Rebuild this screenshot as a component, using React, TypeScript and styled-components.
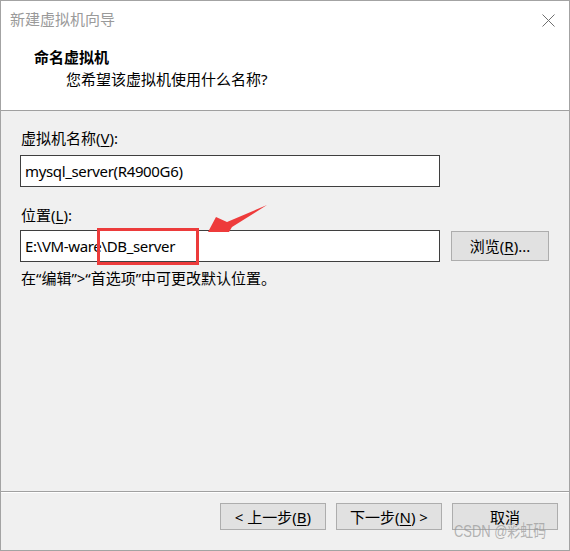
import React from "react";
import styled, { createGlobalStyle } from "styled-components";

const Global = createGlobalStyle`
  html, body { margin: 0; padding: 0; background: #ffffff; }
  body { font-family: "Noto Sans", "Noto Sans CJK SC", sans-serif; }
  #root { width: 570px; height: 551px; }
`;

const Window = styled.div`
  position: relative;
  box-sizing: border-box;
  width: 570px;
  height: 551px;
  border: 1px solid #a3a3a3;
  background: #f0f0f0;
  display: flex;
  flex-direction: column;
  font-family: "Noto Sans", "Noto Sans CJK SC", sans-serif;
  font-size: 15px;
  color: #000;
  overflow: hidden;
`;

const Header = styled.div`
  height: 109px;
  background: #ffffff;
  border-bottom: 1px solid #a0a0a0;
  display: flex;
  flex-direction: column;
  position: relative;
`;

const TitleBar = styled.div`
  display: flex;
  justify-content: space-between;
  align-items: center;
  height: 24px;
  padding: 6px 14px 0 9px;
`;

const Title = styled.span`
  color: #9a9a9a;
  font-size: 15px;
  line-height: 20px;
`;

const CloseButton = styled.span`
  display: flex;
  width: 13px;
  height: 13px;
  margin-top: 2px;
`;

const HeaderTitle = styled.div`
  font-weight: bold;
  font-size: 15px;
  line-height: 20px;
  margin: 16px 0 0 33px;
`;

const HeaderSub = styled.div`
  font-size: 15px;
  line-height: 20px;
  margin: 2px 0 0 65px;
`;

const Content = styled.div`
  flex: 1;
  display: flex;
  flex-direction: column;
  padding: 17px 0 0 19px;
`;

const Label = styled.div<{ $top?: number }>`
  line-height: 20px;
  margin-top: ${(p) => p.$top ?? 0}px;
  padding-left: 1px;
`;

const Row = styled.div`
  display: flex;
  align-items: center;
  gap: 11px;
`;

const Field = styled.div<{ $top: number }>`
  box-sizing: border-box;
  width: 420px;
  height: 32px;
  margin-top: ${(p) => p.$top}px;
  background: #ffffff;
  border: 1px solid #3f3f3f;
  padding: 0 0 0 4px;
  display: flex;
  align-items: center;
  line-height: 20px;
  letter-spacing: -0.35px;
  white-space: pre;
`;

const Button = styled.div<{ $w?: number; $h?: number }>`
  box-sizing: border-box;
  width: ${(p) => p.$w ?? 98}px;
  height: ${(p) => p.$h ?? 30}px;
  background: #e1e1e1;
  border: 1px solid #adadad;
  display: flex;
  align-items: center;
  justify-content: center;
  line-height: 20px;
  white-space: pre;
`;

const Note = styled.div`
  line-height: 20px;
  margin-top: 6px;
  padding-left: 1px;
`;

const Footer = styled.div`
  height: 47px;
  border-top: 1px solid #a0a0a0;
  box-shadow: inset 0 1px 0 #ffffff;
  display: flex;
  justify-content: flex-end;
  align-items: flex-start;
  gap: 10px;
  padding: 11px 11px 0 0;
`;

const Key = styled.u`
  text-decoration-thickness: 1px;
  text-underline-offset: 2px;
`;

const Highlight = styled.div`
  position: absolute;
  left: 96px;
  top: 227px;
  width: 102px;
  height: 37px;
  box-sizing: border-box;
  border: 3px solid #ec3b3b;
  pointer-events: none;
`;

const Overlay = styled.svg`
  position: absolute;
  left: 0;
  top: 0;
  pointer-events: none;
`;

const Watermark = styled.div`
  position: absolute;
  left: 453px;
  top: 519px;
  font-size: 17px;
  line-height: 24px;
  color: rgba(150, 150, 150, 0.7);
  font-family: "Liberation Sans", "Noto Sans CJK SC", sans-serif;
  transform: scaleX(0.76);
  transform-origin: left center;
  white-space: pre;
  pointer-events: none;
`;

export default function App() {
  return (
    <>
      <Global />
      <Window>
        <Header>
          <TitleBar>
            <Title>新建虚拟机向导</Title>
            <CloseButton>
              <svg width="13" height="13" viewBox="0 0 13 13">
                <path d="M0.5 0.5 L12.5 12.5 M12.5 0.5 L0.5 12.5" stroke="#6f6f6f" strokeWidth="1" fill="none" />
              </svg>
            </CloseButton>
          </TitleBar>
          <HeaderTitle>命名虚拟机</HeaderTitle>
          <HeaderSub>您希望该虚拟机使用什么名称?</HeaderSub>
        </Header>
        <Content>
          <Label>
            虚拟机名称(<Key>V</Key>):
          </Label>
          <Field $top={7}>mysql_server(R4900G6)</Field>
          <Label $top={18}>
            位置(<Key>L</Key>):
          </Label>
          <Row>
            <Field $top={5}>E:\VM-ware\DB_server</Field>
            <Button style={{ marginTop: 5 }}>
              浏览(<Key>R</Key>)...
            </Button>
          </Row>
          <Note>在“编辑”&gt;“首选项”中可更改默认位置。</Note>
        </Content>
        <Footer>
          <Button $w={106} $h={27}>
            {"< 上一步("}<Key>B</Key>)
          </Button>
          <Button $w={106} $h={27}>
            {"下一步("}<Key>N</Key>{") >"}
          </Button>
          <Button $w={106} $h={27}>取消</Button>
        </Footer>
        <Highlight />
        <Overlay width="570" height="551" viewBox="0 0 570 551">
          <polygon points="207,231 215,216 226,221 266,204 231,226 228,231" fill="#ee3b3b" />
        </Overlay>
        <Watermark>CSDN @彩虹码</Watermark>
      </Window>
    </>
  );
}
